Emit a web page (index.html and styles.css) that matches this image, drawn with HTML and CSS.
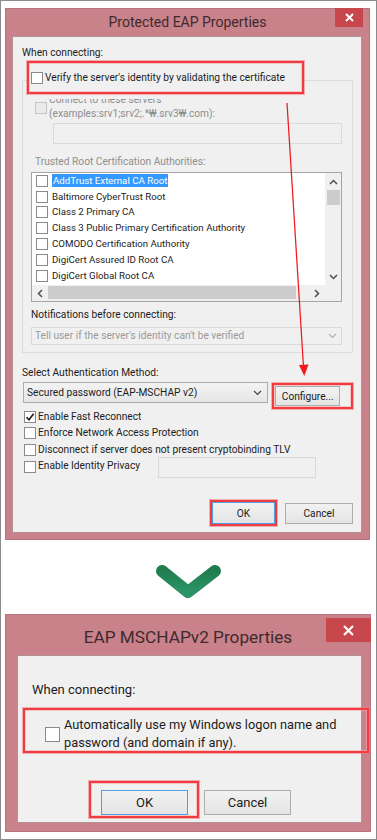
FILE: index.html
```html
<!DOCTYPE html>
<html lang="en">
<head>
    <meta charset="UTF-8">
    <meta name="viewport" content="width=device-width, initial-scale=1.0">
    <title>PEAP / MSCHAPv2 settings</title>
    <link rel="stylesheet" href="styles.css">
</head>
<body>
<div class="page">

    <!-- dialog 1: Protected EAP Properties -->
    <div class="dlg peap">
        <div class="titlebar">
            <span class="title">Protected EAP Properties</span>
            <span class="close"><svg width="9" height="9" viewBox="0 0 9 9"><path d="M1 1L8 8M8 1L1 8" stroke="#fff" stroke-width="2"/></svg></span>
        </div>
        <div class="client">
            <div class="lbl">When connecting:</div>
            <div class="note verify">
                <span class="cb"></span><span>Verify the server's identity by validating the certificate</span>
            </div>

            <div class="group">
                <div class="servers">
                    <span class="cb off"></span>
                    <span><span class="cut">Connect to these servers</span><br>(examples:srv1;srv2;.*₩.srv3₩.com):</span>
                </div>
                <div class="field servers-field"></div>
                <div class="lbl dim trusted">Trusted Root Certification Authorities:</div>
                <div class="listbox">
                    <ul class="items">
                        <li><span class="cb"></span><span class="sel">AddTrust External CA Root</span></li>
                        <li><span class="cb"></span><span>Baltimore CyberTrust Root</span></li>
                        <li><span class="cb"></span><span>Class 2 Primary CA</span></li>
                        <li><span class="cb"></span><span>Class 3 Public Primary Certification Authority</span></li>
                        <li><span class="cb"></span><span>COMODO Certification Authority</span></li>
                        <li><span class="cb"></span><span>DigiCert Assured ID Root CA</span></li>
                        <li><span class="cb"></span><span>DigiCert Global Root CA</span></li>
                    </ul>
                    <div class="vscroll">
                        <span class="arrow"><svg width="9" height="6" viewBox="0 0 9 6"><path d="M1 5L4.5 1.5L8 5" fill="none" stroke="#505050" stroke-width="1.5"/></svg></span>
                        <span class="thumb"></span>
                        <span class="track"></span>
                        <span class="arrow"><svg width="9" height="6" viewBox="0 0 9 6"><path d="M1 1L4.5 4.5L8 1" fill="none" stroke="#505050" stroke-width="1.5"/></svg></span>
                    </div>
                    <div class="hscroll">
                        <span class="arrow"><svg width="6" height="9" viewBox="0 0 6 9"><path d="M5 1L1.5 4.5L5 8" fill="none" stroke="#505050" stroke-width="1.5"/></svg></span>
                        <span class="thumb"></span>
                        <span class="track"></span>
                        <span class="arrow"><svg width="6" height="9" viewBox="0 0 6 9"><path d="M1 1L4.5 4.5L1 8" fill="none" stroke="#505050" stroke-width="1.5"/></svg></span>
                    </div>
                    <div class="corner"></div>
                </div>
                <div class="lbl notif">Notifications before connecting:</div>
                <div class="combo off">
                    <span>Tell user if the server's identity can't be verified</span>
                    <svg width="9" height="6" viewBox="0 0 9 6"><path d="M1 1L4.5 4.5L8 1" fill="none" stroke="#b0b0b0" stroke-width="1.2"/></svg>
                </div>
            </div>

            <div class="lbl method">Select Authentication Method:</div>
            <div class="method-row">
                <div class="combo main">
                    <span>Secured password (EAP-MSCHAP v2)</span>
                    <svg width="9" height="6" viewBox="0 0 9 6"><path d="M1 1L4.5 4.5L8 1" fill="none" stroke="#404040" stroke-width="1.2"/></svg>
                </div>
                <div class="note configure"><button class="btn">Configure...</button></div>
            </div>

            <ul class="opts">
                <li><span class="cb"><svg width="10" height="10" viewBox="0 0 10 10"><path d="M1.5 5.2L4 7.8L8.6 1.8" fill="none" stroke="#1a1a1a" stroke-width="1.6"/></svg></span><span>Enable Fast Reconnect</span></li>
                <li><span class="cb"></span><span>Enforce Network Access Protection</span></li>
                <li><span class="cb"></span><span>Disconnect if server does not present cryptobinding TLV</span></li>
                <li class="privacy"><span class="cb"></span><span class="privacy-txt">Enable Identity Privacy</span><span class="field privacy-field"></span></li>
            </ul>

            <div class="actions">
                <div class="note ok-note"><button class="btn default">OK</button></div>
                <button class="btn cancel">Cancel</button>
            </div>
        </div>
    </div>

    <svg class="chevron" width="375" height="74" viewBox="0 0 375 74">
        <defs>
            <linearGradient id="grn" x1="0" y1="0" x2="0" y2="1">
                <stop offset="0" stop-color="#1f7d50"/>
                <stop offset="1" stop-color="#2c9565"/>
            </linearGradient>
        </defs>
        <polyline points="161,31 187,52 214,31" fill="none" stroke="url(#grn)" stroke-width="12" stroke-linecap="round" stroke-linejoin="round"/>
    </svg>

    <!-- dialog 2: EAP MSCHAPv2 Properties -->
    <div class="dlg mschap">
        <div class="titlebar">
            <span class="title">EAP MSCHAPv2 Properties</span>
            <span class="close"><svg width="11" height="11" viewBox="0 0 11 11"><path d="M1 1L10 10M10 1L1 10" stroke="#fff" stroke-width="2.2"/></svg></span>
        </div>
        <div class="client">
            <div class="lbl">When connecting:</div>
            <div class="note logon">
                <span class="cb"></span>
                <span>Automatically use my Windows logon name and<br>password (and domain if any).</span>
            </div>
            <div class="actions">
                <div class="note ok-note"><button class="btn default">OK</button></div>
                <button class="btn cancel">Cancel</button>
            </div>
        </div>
    </div>

    <!-- red pointer drawn over the first dialog -->
    <svg class="pointer" width="377" height="840" viewBox="0 0 377 840">
        <line x1="287" y1="103" x2="303.5" y2="367" stroke="#f01a1a" stroke-width="1.3"/>
        <polygon points="299,365 308.5,364.5 304.3,376" fill="#f01a1a"/>
    </svg>
</div>
</body>
</html>
```

FILE: styles.css
```css
* { box-sizing: border-box; }
body { margin: 0; background: #fff; font-family: Roboto, "Open Sans", "DejaVu Sans", sans-serif; color: #1c1c1c; }
ul { margin: 0; padding: 0; list-style: none; }
button { font-family: inherit; color: inherit; padding: 0; }

.page { position: relative; width: 377px; height: 840px; border: 1px solid #8c8c8c; padding-top: 7px; background: #fff; }
.pointer { position: absolute; top: -1px; left: -1px; pointer-events: none; z-index: 5; }
.chevron { display: block; }

/* window frame */
.dlg { background: #c9818a; border: 1px solid #b8747e; }
.titlebar { position: relative; text-align: center; color: #3e2a2e; }
.close { position: absolute; display: flex; align-items: center; justify-content: center; background: #c8474d; }
.client { position: relative; background: #f0f0f0; border: 1px solid #b39297; }

.cb { display: inline-flex; align-items: center; justify-content: center; flex: none; width: 12px; height: 12px; border: 1px solid #8a8a8a; background: #fff; }
.cb.off { background: #ebebeb; border-color: #c6c6c6; }

.note { position: relative; z-index: 1; border: 2px solid #ee3c40; box-shadow: 0 0 0 1px rgba(243, 120, 124, .55), inset 0 0 0 1px rgba(255, 170, 172, .6); }

.btn { display: flex; align-items: center; justify-content: center; border: 1px solid #acacac; background: linear-gradient(#f2f2f2, #e4e4e4); }
.btn.default { border-color: #4f9de3; }

.field { display: block; border: 1px solid #dadada; background: #f0f0f0; }

/* --- Protected EAP Properties --- */
.peap { width: 365px; height: 532px; margin-left: 4px; }
.peap .titlebar { height: 27px; line-height: 27px; font-size: 14px; }
.peap .close { top: -1px; right: 6px; width: 28px; height: 19px; }
.peap .client { margin-left: 6px; width: 350px; height: 497px; padding: 9px 8px 0 9px; font-size: 10.2px; line-height: 14px; }

.lbl { height: 14px; }
.dim { color: #8e8e8e; }

.verify { display: flex; align-items: center; gap: 2px; margin: 1px 0 0 5px; width: 277px; height: 33px; padding-left: 2px; background: #f0f0f0; }

.group { margin-top: -14px; width: 331px; height: 273px; border: 1px solid #dcdcdc; }
.servers { display: flex; gap: 2px; margin: 12px 0 0 12px; color: #8e8e8e; }
.servers .cb { margin-top: 9px; }
.cut { display: inline-block; clip-path: inset(6px 0 0 0); }
.servers-field { margin: 2px 0 0 30px; width: 289px; height: 21px; }
.trusted { margin: 11px 0 0 12px; }

.listbox { display: grid; grid-template-columns: 1fr 16px; grid-template-rows: 1fr 16px; margin: 3px 0 0 8px; width: 311px; height: 130px; border: 1px solid #a5a5a5; background: #fff; }
.items { overflow: hidden; font-size: 9.7px; }
.items li { display: flex; align-items: center; gap: 4px; height: 15.8px; padding-left: 4px; white-space: nowrap; }
.items .sel { background: #3399ff; color: #fff; padding: 0 1px; line-height: 13px; }
.vscroll { display: flex; flex-direction: column; background: #f0f0f0; }
.vscroll .arrow { display: flex; align-items: center; justify-content: center; height: 17px; }
.vscroll .thumb { height: 15px; margin: 0 1px 0 2px; background: #cdcdcd; }
.vscroll .track { flex: 1; }
.hscroll { display: flex; background: #f0f0f0; }
.hscroll .arrow { display: flex; align-items: center; justify-content: center; width: 16px; }
.hscroll .arrow:last-child { width: 17px; }
.hscroll .thumb { width: 248px; margin: 1px 0 2px; background: #cdcdcd; }
.hscroll .track { flex: 1; }
.corner { background: #f0f0f0; }

.notif { margin: 6px 0 0 8px; }
.combo { display: flex; align-items: center; justify-content: space-between; white-space: nowrap; }
.combo.off { margin: 5px 0 0 8px; width: 311px; height: 18px; padding: 0 4px 0 3px; border: 1px solid #d9d9d9; color: #9a9a9a; }

.method { margin-top: 13px; }
.method-row { display: flex; align-items: flex-start; height: 28px; margin-top: 2px; }
.combo.main { margin-left: 1px; width: 249px; height: 21px; padding: 0 5px 0 3px; border: 1px solid #acacac; background: linear-gradient(#f3f3f3, #e6e6e6); }
.configure { margin: 1px 0 0 4px; width: 82px; height: 26px; padding: 1px 0 0 1px; }
.configure .btn { width: 65px; height: 20px; font-size: 10.2px; }

.opts { margin-top: -1px; }
.opts li { display: flex; align-items: center; gap: 2px; height: 16.33px; padding-left: 2px; white-space: nowrap; }
.privacy { align-items: flex-start; }
.privacy .cb { margin-top: 2px; }
.privacy-txt { width: 118px; line-height: 16px; }
.privacy-field { margin-top: 2px; width: 158px; height: 21px; }

.peap .actions { display: flex; justify-content: flex-end; align-items: center; gap: 8px; margin-top: 25.7px; }
.peap .ok-note { display: flex; align-items: center; justify-content: center; width: 67px; height: 26px; }
.peap .ok-note .btn { width: 63px; height: 22px; font-size: 10.2px; }
.peap .cancel { width: 68px; height: 21px; font-size: 10.2px; }

/* --- EAP MSCHAPv2 Properties --- */
.mschap { width: 366px; height: 218px; margin-left: 4px; }
.mschap .titlebar { height: 40px; padding-top: 4px; line-height: 36px; font-size: 17.2px; }
.mschap .close { top: 3px; right: -1px; width: 45px; height: 24px; }
.mschap .client { margin-left: 11px; width: 345px; height: 168px; padding: 25px 0 0 14px; font-size: 12.8px; line-height: 18px; }
.mschap .lbl { height: 18px; font-size: 13px; }
.logon { display: flex; align-items: flex-start; gap: 4px; margin: 9px 0 0 -9px; width: 346px; height: 45px; padding: 6px 0 0 20px; }
.logon .cb { width: 15px; height: 15px; margin-top: 11px; }
.mschap .actions { display: flex; align-items: flex-start; margin: 28px 0 0 57px; }
.mschap .ok-note { width: 110px; height: 37px; padding: 7px 0 0 10px; }
.mschap .ok-note .btn { width: 87px; height: 25px; font-size: 13px; }
.mschap .cancel { margin: 9px 0 0 5px; width: 87px; height: 25px; font-size: 13px; }
```
